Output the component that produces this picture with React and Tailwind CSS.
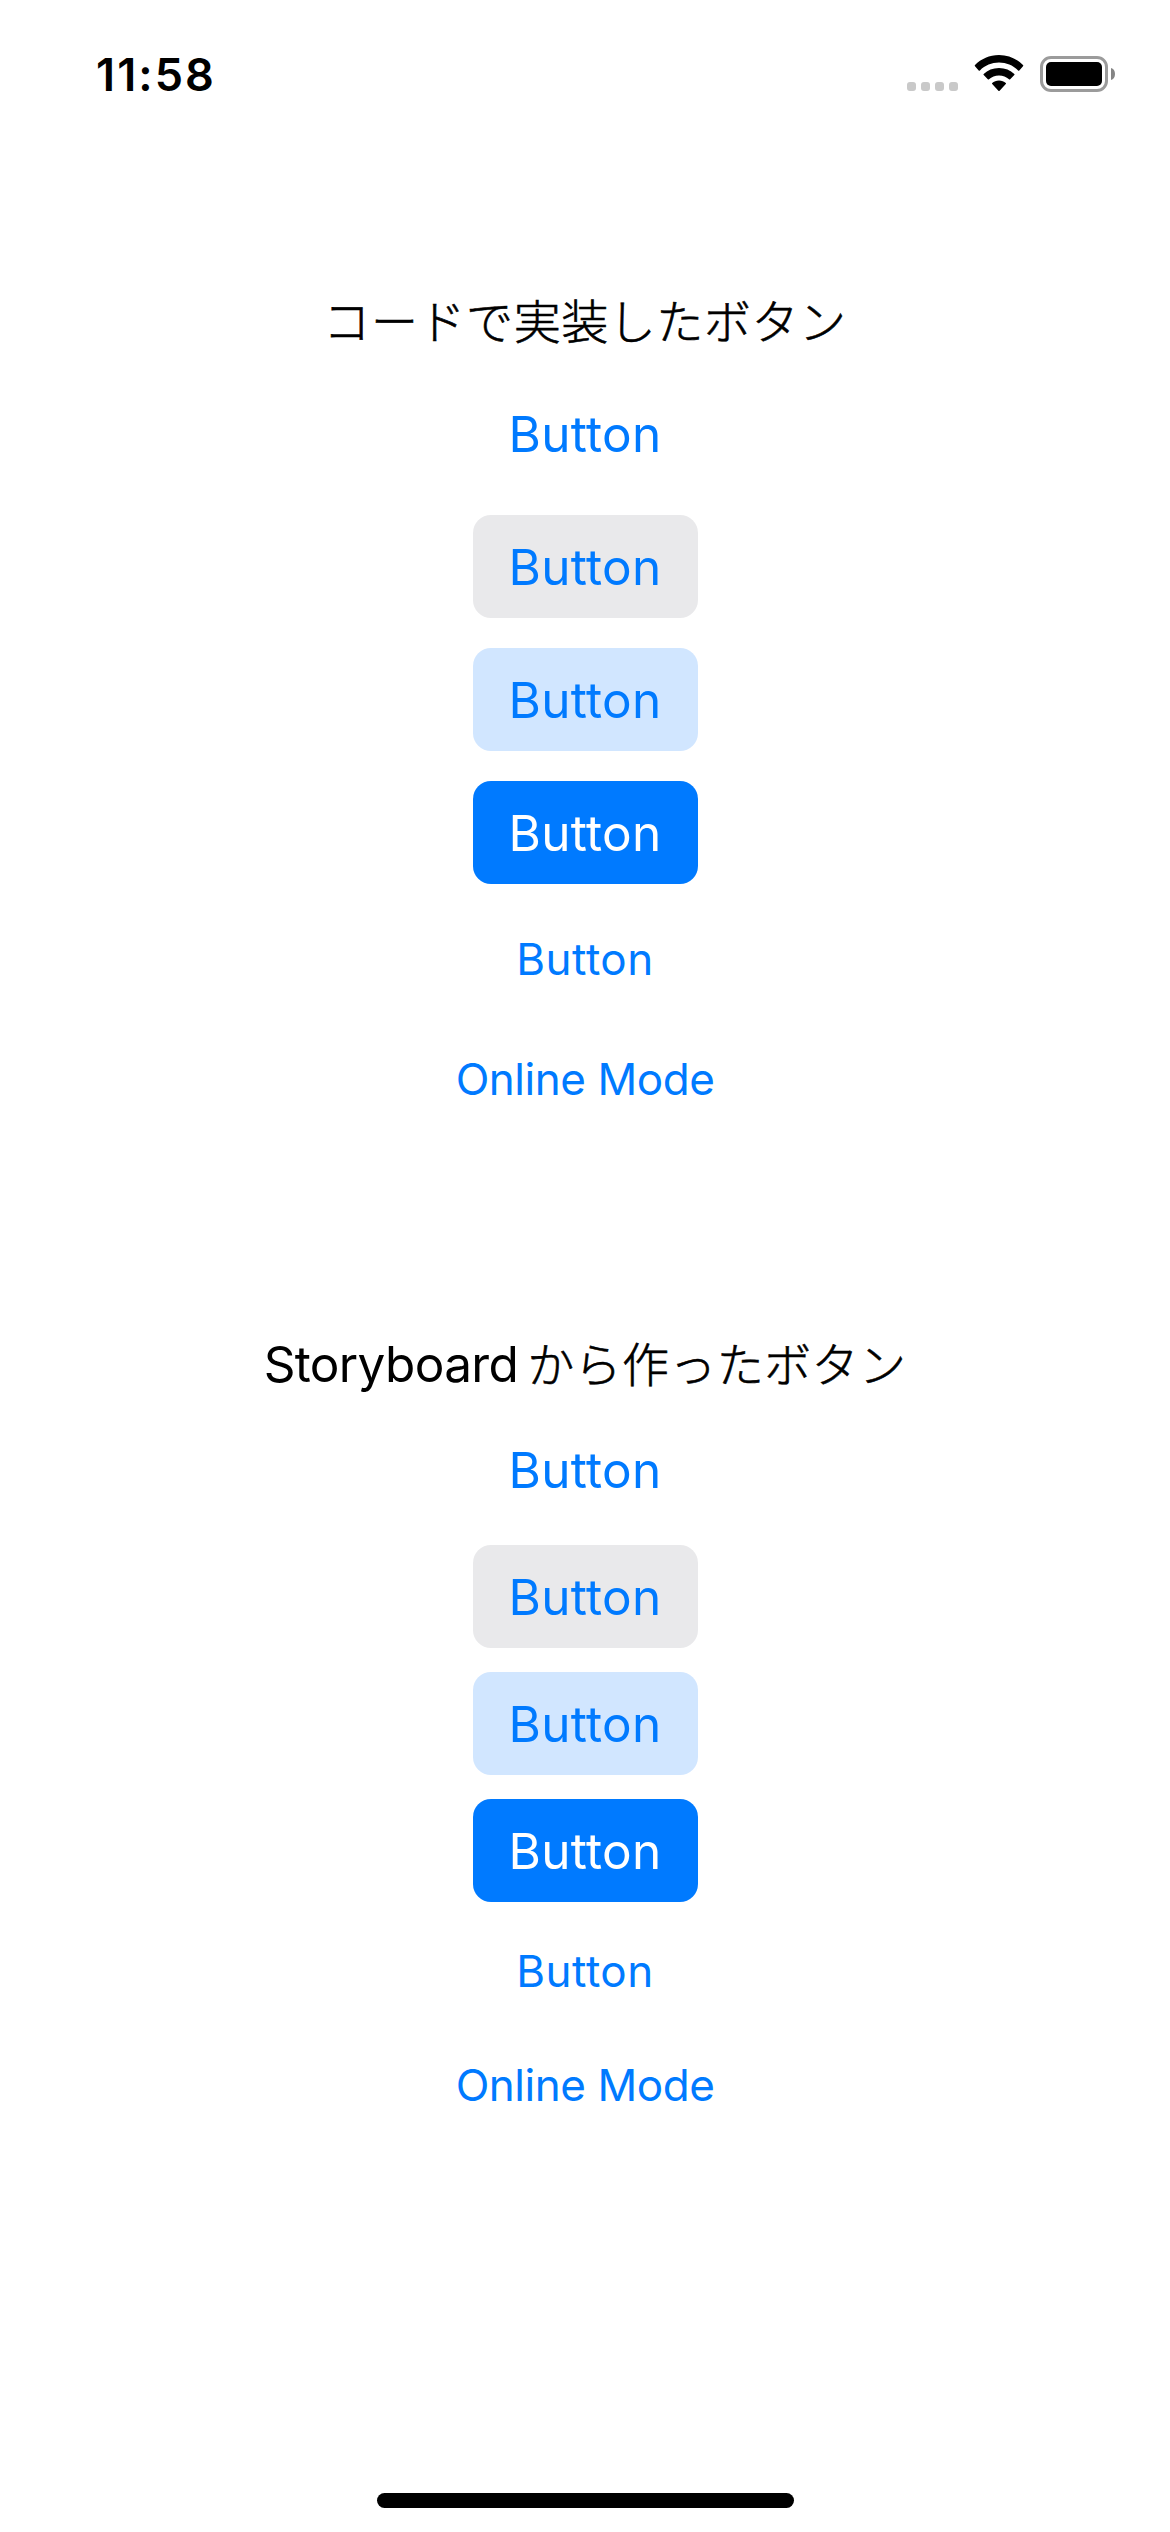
function StatusBar() {
  return (
    <header className="flex h-[141px] w-full items-start justify-between pl-[96px] pr-[55px]">
      <time className="mt-[52px] text-[45px] leading-[46px] font-semibold tracking-[2.1px]">11:58</time>
      <div className="mt-[55px] flex items-start">
        <div className="mt-[27px] flex gap-[5px]">
          <span className="size-[9px] rounded-[3px] bg-[#c9c9c9]" />
          <span className="size-[9px] rounded-[3px] bg-[#c9c9c9]" />
          <span className="size-[9px] rounded-[3px] bg-[#c9c9c9]" />
          <span className="size-[9px] rounded-[3px] bg-[#c9c9c9]" />
        </div>
        <svg className="ml-[16px] h-[37px] w-[50px]" viewBox="0 0 50 37" fill="#000">
          <path d="M25 0C34.6 0 42.8 3.8 49 10.1Q49.5 10.7 49 11.3L45.3 15.4Q44.7 16 44.1 15.4C38.9 10.4 32.4 7.6 25 7.6S11.1 10.4 5.9 15.4Q5.3 16 4.7 15.4L1 11.3Q.5 10.7 1 10.1C7.2 3.8 15.4 0 25 0Z" />
          <path d="M25 12.9C31.2 12.9 36.3 15.2 40.3 18.9Q40.9 19.5 40.3 20.1L36.2 24.3Q35.6 24.9 35 24.3C32.3 21.9 29 20.4 25 20.4S17.7 21.9 15 24.3Q14.4 24.9 13.8 24.3L9.7 20.1Q9.1 19.5 9.7 18.9C13.7 15.2 18.8 12.9 25 12.9Z" />
          <path d="M25 25.6C27.8 25.6 30 26.6 31.8 28.1Q32.3 28.6 31.8 29.1L25.6 35.7Q25 36.3 24.4 35.7L18.2 29.1Q17.7 28.6 18.2 28.1C20 26.6 22.2 25.6 25 25.6Z" />
        </svg>
        <svg className="ml-[15px] h-[37px] w-[76px]" viewBox="0 0 76 37">
          <rect x="2.5" y="2.5" width="65" height="33" rx="9.5" fill="none" stroke="#9b9b9b" strokeWidth="3" />
          <rect x="7" y="7" width="56" height="24" rx="5" fill="#000" />
          <path d="M72 13C74.5 13.5 76 16 76 19S74.5 24.500 72 25Z" fill="#858585" />
        </svg>
      </div>
    </header>
  );
}

const BASE = "flex items-center justify-center whitespace-nowrap";
const LARGE = "h-[103px] w-[225px] rounded-[18px] pt-px text-[49.5px] leading-[50px] tracking-[0.3px]";

function ButtonList() {
  return (
    <>
      <button className={`${BASE} ${LARGE} text-[#007aff]`}>Button</button>
      <button className={`${BASE} ${LARGE} bg-[#e9e9eb] text-[#007aff]`}>Button</button>
      <button className={`${BASE} ${LARGE} bg-[#d1e6ff] text-[#007aff]`}>Button</button>
      <button className={`${BASE} ${LARGE} bg-[#007aff] text-white`}>Button</button>
      <button className={`${BASE} h-[90px] text-[44px] leading-none tracking-[0.5px] text-[#007aff]`}>Button</button>
      <button className={`${BASE} h-[90px] text-[44px] leading-none tracking-[-0.45px] text-[#007aff]`}>Online Mode</button>
    </>
  );
}

export default function App() {
  return (
    <div className="flex h-[2532px] w-[1170px] flex-col items-center bg-white font-['Inter','Noto_Sans_CJK_JP',sans-serif] text-black">
      <StatusBar />
      <section className="mt-[150px] flex flex-col items-center gap-[30px]">
        <h2 className="h-[61px] font-['Noto_Sans_CJK_JP',sans-serif] text-[47px] leading-[55px] font-light tracking-[0.57px] whitespace-nowrap [-webkit-text-stroke:0.6px_black]">
          コードで実装したボタン
        </h2>
        <ButtonList />
      </section>
      <section className="mt-[209px] flex flex-col items-center gap-[24px]">
        <h2 className="h-[61px] text-[49.5px] leading-[62px] tracking-[-0.65px] whitespace-nowrap">
          Storyboard
          <span className="ml-[9px] font-['Noto_Sans_CJK_JP',sans-serif] text-[47px] leading-none font-light tracking-[0.4px] [-webkit-text-stroke:0.6px_black]">
            から作ったボタン
          </span>
        </h2>
        <ButtonList />
      </section>
      <div className="mt-auto mb-[24px] h-[15px] w-[417px] rounded-full bg-black" />
    </div>
  );
}
